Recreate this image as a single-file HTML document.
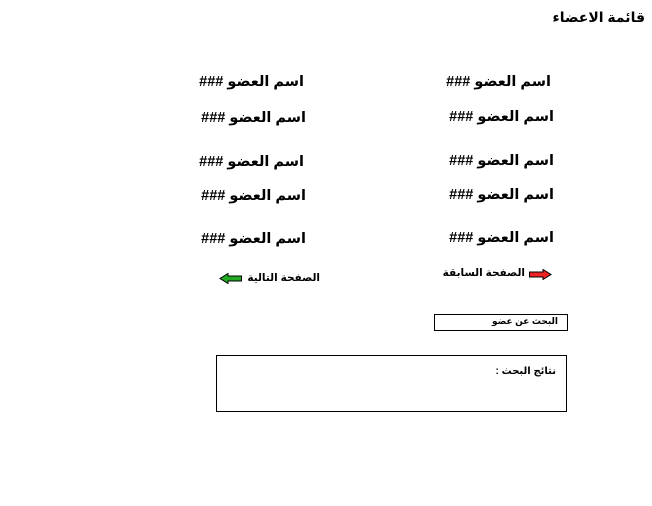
<!DOCTYPE html>
<html><head><meta charset="utf-8"><style>
body{margin:0;width:652px;height:506px;background:#fff;position:relative;font-family:"Liberation Sans","DejaVu Sans",sans-serif;font-weight:bold;color:#000;overflow:hidden}
.t{position:absolute;direction:rtl;white-space:nowrap;line-height:1}
.m{font-size:14.5px}
.box{position:absolute;border:1px solid #000}
</style></head><body>
<div class="t" style="right:7px;top:10px;font-size:14px">قائمة الاعضاء</div>

<div class="t m" style="right:101px;top:75px">اسم العضو ###</div>
<div class="t m" style="right:98px;top:110px">اسم العضو ###</div>
<div class="t m" style="right:98px;top:154px">اسم العضو ###</div>
<div class="t m" style="right:98px;top:188px">اسم العضو ###</div>
<div class="t m" style="right:98px;top:231px">اسم العضو ###</div>

<div class="t m" style="right:348px;top:75px">اسم العضو ###</div>
<div class="t m" style="right:346px;top:111px">اسم العضو ###</div>
<div class="t m" style="right:348px;top:155px">اسم العضو ###</div>
<div class="t m" style="right:346px;top:189px">اسم العضو ###</div>
<div class="t m" style="right:346px;top:232px">اسم العضو ###</div>

<div class="t" style="right:127px;top:268px;font-size:10.5px">الصفحة السابقة</div>
<svg style="position:absolute;left:529px;top:269px" width="23" height="11"><path d="M0.5 3 H14 V0.5 L22 5.5 L14 10.5 V8 H0.5 Z" fill="#e22" stroke="#000" stroke-width="1"/></svg>
<div class="t" style="right:332px;top:273px;font-size:10.5px">الصفحة التالية</div>
<svg style="position:absolute;left:219px;top:273px" width="23" height="11"><path d="M22.5 3 H9 V0.5 L1 5.5 L9 10.5 V8 H22.5 Z" fill="#2a2" stroke="#000" stroke-width="1"/></svg>

<div class="box" style="left:434px;top:314px;width:132px;height:15px"></div>
<div class="t" style="right:94px;top:317px;font-size:9px">البحث عن عضو</div>

<div class="box" style="left:216px;top:355px;width:349px;height:55px"></div>
<div class="t" style="right:96px;top:367px;font-size:10px">نتائج البحث :</div>
</body></html>
